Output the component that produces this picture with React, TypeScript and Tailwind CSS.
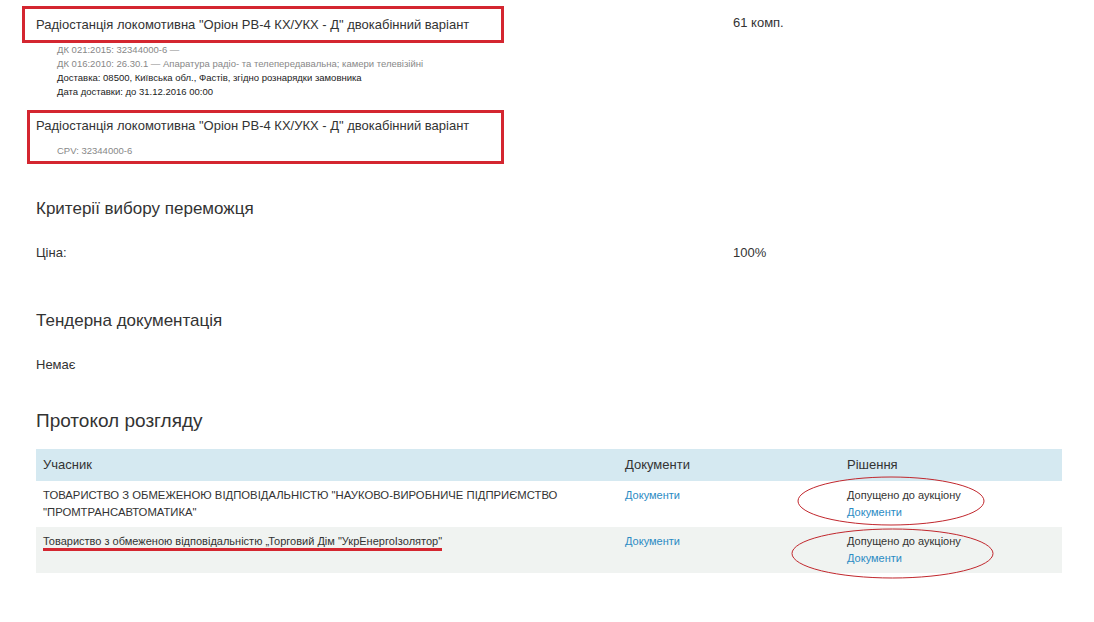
import React from "react";

const font = { fontFamily: '"Liberation Sans", Arial, sans-serif' };

type Bid = {
  name: string;
  underline?: boolean;
  ring: { left: number; top: number; w: number; h: number };
};

const bids: Bid[] = [
  {
    name: 'ТОВАРИСТВО З ОБМЕЖЕНОЮ ВІДПОВІДАЛЬНІСТЮ "НАУКОВО-ВИРОБНИЧЕ ПІДПРИЄМСТВО "ПРОМТРАНСАВТОМАТИКА"',
    ring: { left: -43, top: -5, w: 188, h: 50 },
  },
  {
    name: 'Товариство з обмеженою відповідальністю „Торговий Дім "УкрЕнергоІзолятор"',
    underline: true,
    ring: { left: -49, top: 1, w: 203, h: 51 },
  },
];

// hand-drawn red ellipse from the screenshot annotation
function Ring({ left, top, w, h }: Bid["ring"]) {
  return (
    <svg
      className="absolute pointer-events-none"
      style={{ left, top }}
      width={w}
      height={h}
      viewBox={`0 0 ${w} ${h}`}
    >
      <ellipse cx={w / 2} cy={h / 2} rx={w / 2 - 1} ry={h / 2 - 1} fill="none" stroke="#c1272d" strokeWidth="1" />
    </svg>
  );
}

export default function App() {
  return (
    <div className="w-[1094px] h-[622px] bg-white text-[#333] overflow-hidden" style={font}>
      <div className="pl-[36px] pt-[6px] w-[1062px]">
        {/* lot item */}
        <div className="grid grid-cols-[697px_1fr]">
          <div className="-ml-[14px] w-[482px] h-[37px] border-[3px] border-[#d42630] pl-[11px] flex items-center text-[13px] leading-[20px] whitespace-nowrap">
            Радіостанція локомотивна "Оріон РВ-4 КХ/УКХ - Д" двокабінний варіант
          </div>
          <div className="text-[13px] leading-[20px] pt-[7px]">61 комп.</div>
        </div>
        <div className="pl-[21px] text-[9.5px] leading-[14px]">
          <div className="text-[#888]">ДК 021:2015: 32344000-6 —</div>
          <div className="text-[#888]">ДК 016:2010: 26.30.1 — Апаратура радіо- та телепередавальна; камери телевізійні</div>
          <div className="text-[#222]">Доставка: 08500, Київська обл., Фастів, згідно рознарядки замовника</div>
          <div className="text-[#222]">Дата доставки: до 31.12.2016 00:00</div>
        </div>

        <div className="-ml-[9px] mt-[11px] w-[477px] h-[54px] border-[3px] border-[#d42630] pl-[6px] pt-[3px]">
          <div className="text-[13px] leading-[20px] whitespace-nowrap">
            Радіостанція локомотивна "Оріон РВ-4 КХ/УКХ - Д" двокабінний варіант
          </div>
          <div className="pl-[21px] mt-[8px] text-[9.5px] leading-[14px] text-[#888]">CPV: 32344000-6</div>
        </div>

        {/* award criteria */}
        <h2 className="mt-[33px] text-[17px] leading-[24px]">Критерії вибору переможця</h2>
        <div className="mt-[24px] grid grid-cols-[697px_1fr] text-[13px] leading-[16px]">
          <div>Ціна:</div>
          <div>100%</div>
        </div>

        <h2 className="mt-[48px] text-[17px] leading-[24px]">Тендерна документація</h2>
        <div className="mt-[24px] text-[13px] leading-[16px]">Немає</div>

        <h2 className="mt-[34px] text-[19px] leading-[28px]">Протокол розгляду</h2>

        <div className="mt-[14px] w-[1026px]">
          <div className="grid grid-cols-[582px_222px_222px] h-[32px] bg-[#d5e9f1] text-[13px] items-center">
            <div className="px-[7px]">Учасник</div>
            <div className="px-[7px]">Документи</div>
            <div className="px-[7px]">Рішення</div>
          </div>
          {bids.map((b, i) => (
            <div
              key={i}
              className={`grid grid-cols-[582px_222px_222px] h-[46px] text-[11px] leading-[17px] ${i % 2 ? "bg-[#f0f3f1]" : "bg-white"}`}
            >
              <div className="px-[7px] pt-[6px]">
                {b.underline ? (
                  <span className="inline-block leading-[14px] pt-[1px] border-b-[3px] border-[#d42630]">{b.name}</span>
                ) : (
                  <span className="text-[11.3px]">{b.name}</span>
                )}
              </div>
              <div className="px-[7px] pt-[6px]">
                <a className="text-[#2b8bc4]">Документи</a>
              </div>
              <div className="relative px-[7px] pt-[6px]">
                <Ring {...b.ring} />
                <div>Допущено до аукціону</div>
                <a className="block text-[#2b8bc4]">Документи</a>
              </div>
            </div>
          ))}
        </div>
      </div>
    </div>
  );
}
